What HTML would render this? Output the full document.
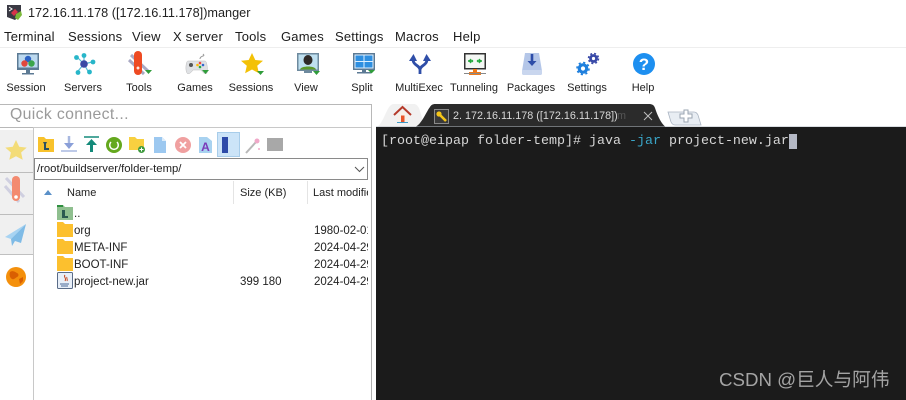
<!DOCTYPE html>
<html><head><meta charset="utf-8">
<style>
html,body{margin:0;padding:0;background:#fff}
#p{position:relative;width:906px;height:400px;overflow:hidden;background:#fff;font-family:"Liberation Sans","Noto Sans CJK SC",sans-serif;color:#222}
.t{position:absolute;white-space:nowrap;line-height:16px}
.m{font-size:13px;top:29px;letter-spacing:.2px;color:#1c1c1c}
.l{font-size:11px;top:80px;width:70px;text-align:center;color:#222}
.f{font-size:11.5px;color:#222}
.b{position:absolute}
svg{position:absolute;overflow:visible}
</style></head><body><div id="p">

<!-- title -->
<svg style="left:6px;top:4px" width="17" height="17" viewBox="0 0 17 17"><path d="M1 1h14v10l-6 5-8-3z" fill="#3a3a44"/><path d="M5 9l4-4 3 3-4 4z" fill="#d8344a"/><path d="M10 10l5-3 1 4-4 5-3-2z" fill="#7cb93a"/><path d="M3 3l3 2-3 2" stroke="#fff" fill="none"/></svg>
<div class="t" style="left:28px;top:5px;font-size:12.7px;color:#222">172.16.11.178 ([172.16.11.178])manger</div>

<!-- menu -->
<div class="t m" style="left:4px">Terminal</div>
<div class="t m" style="left:68px">Sessions</div>
<div class="t m" style="left:132px">View</div>
<div class="t m" style="left:173px">X server</div>
<div class="t m" style="left:235px">Tools</div>
<div class="t m" style="left:281px">Games</div>
<div class="t m" style="left:335px">Settings</div>
<div class="t m" style="left:395px">Macros</div>
<div class="t m" style="left:453px">Help</div>
<div class="b" style="left:0;top:47px;width:906px;height:1px;background:#eee"></div>

<!-- toolbar icons -->
<svg style="left:17px;top:53px" width="22" height="22"><rect x="0" y="0" width="22" height="17" fill="#5c7a94"/><rect x="1.500" y="1.500" width="19" height="13" fill="#bcd9ef"/><circle cx="11" cy="6" r="3.200" fill="#2c62c4"/><circle cx="7.500" cy="10.500" r="3.200" fill="#e2483c"/><circle cx="14.500" cy="10.500" r="3.200" fill="#3aa54a"/><rect x="9" y="17" width="4" height="3" fill="#5c7a94"/><rect x="5" y="20" width="12" height="1.500" fill="#5c7a94"/></svg>
<svg style="left:73px;top:53px" width="22" height="22"><g stroke="#58bcd6" stroke-width="1.200"><path d="M11 11L4 4M11 11L11 2M11 11L19 9M11 11L16 20M11 11L5 18"/></g><circle cx="11" cy="11" r="3.800" fill="#3b49a5"/><g fill="#27b6c9"><circle cx="3.500" cy="4.500" r="2.400"/><circle cx="11" cy="2.500" r="2.400"/><circle cx="20" cy="9" r="2.400"/><circle cx="16.500" cy="19" r="2.400"/><circle cx="5" cy="19.500" r="2.400"/></g></svg>
<svg style="left:129px;top:52px" width="24" height="24"><path d="M2 3L20 20M0 8L15 22" stroke="#a9a9c4" stroke-width="3"/><path d="M5 3a4 4 0 0 1 8 0v16a4 4 0 0 1-8 0z" fill="#ee4a22"/><path d="M7.500 16h3M9 14.500v3" stroke="#fff" stroke-width="1.300"/><path d="M16 18h7l-3.500 4z" fill="#2f9c3a"/></svg>
<svg style="left:185px;top:54px" width="24" height="22"><path d="M15 5C15 1 21 3 18 0" stroke="#999" fill="none"/><path d="M3 7h17c2 0 3 9 2 12-1 2-4 0-6-3H8c-2 3-5 5-6 3C0 16 1 7 3 7z" fill="#dfe1e4" stroke="#bbb" stroke-width=".5"/><circle cx="6" cy="11" r="2" fill="#555"/><circle cx="15" cy="9" r="1.300" fill="#e44"/><circle cx="18" cy="11" r="1.300" fill="#36c"/><circle cx="15" cy="13" r="1.300" fill="#2a4"/><circle cx="12.500" cy="11" r="1.300" fill="#fb0"/><path d="M17 16h7l-3.500 4z" fill="#2f9c3a"/></svg>
<svg style="left:241px;top:53px" width="24" height="22"><path d="M11 0l3.300 7 7.700.8-5.800 5 1.700 7.500L11 16.500 4.100 20.300l1.700-7.500L0 7.800 7.700 7z" fill="#f3c106"/><path d="M16 18h7l-3.500 4z" fill="#2f9c3a"/></svg>
<svg style="left:297px;top:53px" width="24" height="22"><rect width="22" height="18" fill="#6e8a9e"/><rect x="1.500" y="1.500" width="19" height="15" fill="#bfe0f0"/><ellipse cx="11" cy="7" rx="4.500" ry="5" fill="#2f2a28"/><path d="M3 16.500c1-4 15-4 16 0z" fill="#5c9a2a"/><rect x="7" y="18" width="8" height="2" fill="#6e8a9e"/><path d="M16 18h7l-3.500 4z" fill="#2f9c3a"/></svg>
<svg style="left:353px;top:53px" width="24" height="22"><rect width="22" height="17" fill="#5c7a94"/><rect x="1.500" y="1.500" width="19" height="14" fill="#dcefff"/><g fill="#2e8fe0"><rect x="2.500" y="2.500" width="8" height="5.500"/><rect x="11.500" y="2.500" width="8" height="5.500"/><rect x="2.500" y="9" width="8" height="5.500"/><rect x="11.500" y="9" width="8" height="5.500"/></g><rect x="9" y="17" width="4" height="2" fill="#5c7a94"/><rect x="4" y="19" width="14" height="1.500" fill="#5c7a94"/><path d="M15 17h7l-3.500 3.500z" fill="#2f9c3a"/></svg>
<svg style="left:409px;top:53px" width="22" height="22"><path d="M4 6c0 7 7 6 7 11v4M18 6c0 7-7 6-7 11" stroke="#2f4ea8" stroke-width="2.800" fill="none"/><path d="M0 8L4.500 1 8 8zM14 8L17.500 1 22 8z" fill="#2f4ea8"/></svg>
<svg style="left:464px;top:53px" width="23" height="23"><rect x=".75" y=".75" width="20.500" height="15" fill="#f4f7f4" stroke="#333" stroke-width="1.500"/><path d="M4 8h5M13 8h5" stroke="#22a83a" stroke-width="1.500"/><path d="M4 8l3-2.500v5zM18 8l-3-2.500v5zM9.500 8l-2-2v4zM12.500 8l2-2v4z" fill="#22a83a"/><rect x="9" y="16" width="4" height="3" fill="#f07a1a"/><rect x="5" y="19" width="12" height="3" fill="#f07a1a"/><path d="M0 20.500h22" stroke="#888"/></svg>
<svg style="left:522px;top:53px" width="20" height="23"><path d="M3 0h14l3 18v2a2 2 0 0 1-2 2H2a2 2 0 0 1-2-2v-2z" fill="#b4c6e8"/><path d="M0 17h20v3a2 2 0 0 1-2 2H2a2 2 0 0 1-2-2z" fill="#c9d6ee"/><rect x="8.700" y="1" width="2.600" height="8" fill="#2d4da8"/><path d="M5.500 8h9L10 13z" fill="#2d4da8"/></svg>
<svg style="left:576px;top:53px" width="24" height="23"><g fill="none"><circle cx="7" cy="15.500" r="3.700" stroke="#1e7fdd" stroke-width="3.200"/><circle cx="7" cy="15.500" r="6" stroke="#1e7fdd" stroke-width="1.600" stroke-dasharray="2.200 2.500"/><circle cx="17.500" cy="5.500" r="3" stroke="#3a4aa8" stroke-width="2.800"/><circle cx="17.500" cy="5.500" r="5" stroke="#3a4aa8" stroke-width="1.500" stroke-dasharray="2 2"/></g></svg>
<svg style="left:633px;top:53px" width="22" height="22"><circle cx="11" cy="11" r="11" fill="#1d8ff0"/><text x="11" y="17" text-anchor="middle" font-family="Liberation Sans" font-weight="bold" font-size="17" fill="#fff">?</text></svg>

<!-- toolbar labels -->
<div class="t l" style="left:-9px">Session</div>
<div class="t l" style="left:48px">Servers</div>
<div class="t l" style="left:104px">Tools</div>
<div class="t l" style="left:160px">Games</div>
<div class="t l" style="left:216px">Sessions</div>
<div class="t l" style="left:271px">View</div>
<div class="t l" style="left:327px">Split</div>
<div class="t l" style="left:384px">MultiExec</div>
<div class="t l" style="left:439px">Tunneling</div>
<div class="t l" style="left:496px">Packages</div>
<div class="t l" style="left:552px">Settings</div>
<div class="t l" style="left:608px">Help</div>

<!-- quick connect -->
<div class="b" style="left:0;top:104px;width:371px;height:22px;border-top:1px solid #b8b8b8;border-right:1px solid #b8b8b8;border-bottom:1px solid #b8b8b8;box-sizing:content-box"></div>
<div class="t" style="left:10px;top:107px;font-size:15.800px;color:#9a9a9a;letter-spacing:.35px">Quick connect...</div>

<!-- tabs -->
<svg style="left:376px;top:104px" width="530" height="24">
<path d="M0 23C6 22 10 6 14 2c1-1 2-2 4-2h20c2 0 3 1 5 4l6 19z" fill="#f1f1f1"/>
<path d="M39 23C46 20 50 8 54 3c1-2 3-3 5-3h214c3 0 5 1 6 4 2 6 6 16 11 19z" fill="#2b2b2b"/>
<path d="M292 8h26c2 0 3 1 4 3l3 10h-26c-2 0-3-1-4-3z" fill="#e8edf3" stroke="#aab4c2" stroke-width=".8"/>
<path d="M0 23H530" stroke="#b5bcc4" stroke-width="1"/>
</svg>
<svg style="left:394px;top:106px" width="18" height="18"><path d="M0 9L8.500 1 17 9" stroke="#b53a2a" stroke-width="2" fill="none"/><path d="M3 9L8.500 4 14 9v7H3z" fill="#f7f0e8"/><rect x="7" y="9.500" width="3.500" height="7" fill="#e8552a"/><path d="M3 16.500h11" stroke="#3e9ac8"/></svg>
<div class="b" style="left:434px;top:109px;width:15px;height:15px;background:#3a3a3a;border:1px solid #8a8a8a;box-sizing:border-box"></div>
<svg style="left:435px;top:110px" width="13" height="13"><path d="M11 11L5 5" stroke="#f5c518" stroke-width="2.600"/><circle cx="4" cy="4" r="2.600" fill="#f5c518"/></svg>
<div class="t" style="left:453px;top:108px;font-size:10.800px;color:#d8d8d8">2. 172.16.11.178 ([172.16.11.178])</div>
<div class="t" style="left:617px;top:108px;font-size:10.800px;color:#555">m</div>
<svg style="left:643px;top:111px" width="10" height="10"><path d="M1 1L9 9M9 1L1 9" stroke="#bdbdbd" stroke-width="1"/></svg>
<svg style="left:679px;top:109px" width="14" height="14"><path d="M5 1h4v4h4v4H9v4H5V9H1V5h4z" fill="#fff" stroke="#9aa4b0"/></svg>

<!-- sidebar -->
<div class="b" style="left:0;top:130px;width:33px;height:124px;background:#f0f0f0;border-right:1px solid #c0c0c0;border-bottom:1px solid #c0c0c0;box-sizing:content-box"></div>
<div class="b" style="left:0;top:172px;width:33px;height:1px;background:#bdbdbd"></div>
<div class="b" style="left:0;top:214px;width:33px;height:1px;background:#bdbdbd"></div>
<svg style="left:5px;top:140px" width="22" height="20"><path d="M11 0l3.200 6.800 7.500.8-5.600 4.900 1.600 7.300L11 16.200 4.300 19.800l1.600-7.300L.3 7.600l7.500-.8z" fill="#f3dc78"/></svg>
<svg style="left:5px;top:175px" width="22" height="32"><path d="M1 3L19 22M0 11L14 27" stroke="#cfcfe0" stroke-width="3"/><path d="M7 5a4 4 0 0 1 8 0v17a4 4 0 0 1-8 0z" fill="#f38a70"/><circle cx="11" cy="22" r="1.800" fill="#fff"/></svg>
<svg style="left:5px;top:224px" width="22" height="22"><path d="M21 0L0 13l6 2z" fill="#a7d3f2"/><path d="M21 0L6 15l1 7 3-5 6 2z" fill="#7fbbe6"/></svg>
<svg style="left:6px;top:267px" width="20" height="20"><circle cx="10" cy="10" r="10" fill="#f4900c"/><path d="M4 5c3-2 5 0 7 1s2 3 0 4-3 3-5 2-3-4-2-7zM13 12l4-2 0 4-3 3z" fill="#d95f02"/></svg>

<!-- file panel -->
<div class="b" style="left:33px;top:127px;width:338px;height:273px;border-left:1px solid #c8c8c8;border-top:1px solid #c8c8c8;box-sizing:border-box"></div>
<div class="b" style="left:371px;top:127px;width:1px;height:273px;background:#b0b0b0"></div>
<div class="b" style="left:376px;top:127px;width:530px;height:273px;background:#1b1b1b"></div>

<!-- file toolbar -->
<svg style="left:38px;top:137px" width="16" height="15"><path d="M0 0h6l2 2h8v13H0z" fill="#f8c22c"/><path d="M5 5h4l-1 2v4h3v2H6V7z" fill="#2b5060"/></svg>
<svg style="left:61px;top:136px" width="16" height="16"><path d="M8 0v10" stroke="#a8b8e0" stroke-width="2.500"/><path d="M3 7h10l-5 6z" fill="#8a9fd8"/><path d="M0 15h16" stroke="#a8b8e0" stroke-width="1.500"/></svg>
<svg style="left:84px;top:136px" width="15" height="16"><path d="M0 1h15" stroke="#148a7a" stroke-width="1.500"/><path d="M2 9l5.500-6L13 9z" fill="#148a7a"/><rect x="6" y="8" width="3" height="8" fill="#148a7a"/></svg>
<svg style="left:106px;top:137px" width="16" height="16"><circle cx="8" cy="8" r="8" fill="#64a81e"/><path d="M5 5a4.300 4.300 0 1 0 6 0" stroke="#fff" stroke-width="1.500" fill="none"/><path d="M8 2v4" stroke="#64a81e" stroke-width="2"/></svg>
<svg style="left:129px;top:137px" width="16" height="16"><path d="M0 0h6l2 2h7v11H0z" fill="#f8d040"/><circle cx="12.500" cy="12.500" r="3.500" fill="#3f9a3f"/><path d="M10.500 12.500h4M12.500 10.500v4" stroke="#fff"/></svg>
<svg style="left:154px;top:137px" width="12" height="16"><path d="M0 0h8l4 4v12H0z" fill="#9cc8f0"/><path d="M8 0v4h4z" fill="#dcecfa"/></svg>
<svg style="left:175px;top:137px" width="16" height="16"><circle cx="8" cy="8" r="8" fill="#f0a0a0"/><path d="M5 5l6 6M11 5l-6 6" stroke="#fff" stroke-width="1.800"/></svg>
<svg style="left:199px;top:137px" width="13" height="16"><path d="M0 0h8l5 4v12H0z" fill="#a8d2f0"/><text x="6.500" y="14" text-anchor="middle" font-family="Liberation Sans" font-weight="bold" font-size="12" fill="#7a3ab8">A</text></svg>
<div class="b" style="left:217px;top:132px;width:23px;height:25px;background:#cce4f8;border:1px solid #a8cdea;box-sizing:border-box"></div>
<div class="b" style="left:222px;top:137px;width:6px;height:16px;background:#2d4aa8"></div>
<svg style="left:245px;top:138px" width="16" height="16"><path d="M1 15L11 4" stroke="#b8b8b8" stroke-width="2"/><circle cx="12" cy="3" r="2.500" fill="#f0a8c8"/><circle cx="14" cy="11" r="1" fill="#f0a8c8"/></svg>
<div class="b" style="left:267px;top:138px;width:16px;height:13px;background:#a8a8a8"></div>

<!-- path -->
<div class="b" style="left:34px;top:158px;width:334px;height:22px;border:1px solid #8a8a8a;box-sizing:border-box"></div>
<div class="t f" style="left:37px;top:161px;font-size:11.300px">/root/buildserver/folder-temp/</div>
<svg style="left:354px;top:166px" width="11" height="7"><path d="M1 1l4.500 4.500L10 1" stroke="#555" fill="none"/></svg>

<!-- header -->
<svg style="left:44px;top:190px" width="8" height="5"><path d="M0 5L4 0l4 5z" fill="#5a90c8"/></svg>
<div class="t f" style="left:67px;top:185px;font-size:11px">Name</div>
<div class="t f" style="left:240px;top:185px;font-size:11px">Size (KB)</div>
<div class="t f" style="left:313px;top:185px;font-size:11px;width:55px;overflow:hidden">Last modified</div>
<div class="b" style="left:233px;top:181px;width:1px;height:23px;background:#e4e4e4"></div>
<div class="b" style="left:307px;top:181px;width:1px;height:23px;background:#e4e4e4"></div>

<!-- rows -->
<svg style="left:57px;top:205px" width="16" height="15"><path d="M0 0h6l2 2h8v13H0z" fill="#8fbf8f"/><path d="M0 0h6v2H0z" fill="#2f8f3f"/><path d="M5 5h3v6h3v2H5z" fill="#2b5a50"/></svg>
<div class="t f" style="left:74px;top:206px;font-size:11.500px">..</div>
<svg style="left:57px;top:222px" width="16" height="15"><path d="M0 0h6l2 2h8v13H0z" fill="#fcc02e"/></svg>
<div class="t f" style="left:74px;top:223px;font-size:11.500px">org</div>
<svg style="left:57px;top:239px" width="16" height="15"><path d="M0 0h6l2 2h8v13H0z" fill="#fcc02e"/></svg>
<div class="t f" style="left:74px;top:240px;font-size:11.500px">META-INF</div>
<svg style="left:57px;top:256px" width="16" height="15"><path d="M0 0h6l2 2h8v13H0z" fill="#fcc02e"/></svg>
<div class="t f" style="left:74px;top:257px;font-size:11.500px">BOOT-INF</div>
<svg style="left:57px;top:272px" width="16" height="17"><rect x=".5" y=".5" width="15" height="16" rx="1" fill="#e8eff8" stroke="#5a6c88"/><path d="M3 12h9M4 14h7" stroke="#4a6a98"/><path d="M8 3c-2 2 2 3 0 6M10 5c-1 1 1 2 0 4" stroke="#c84a20" fill="none"/></svg>
<div class="t f" style="left:74px;top:274px;font-size:11.500px">project-new.jar</div>
<div class="t f" style="left:240px;top:274px;font-size:11.500px">399 180</div>
<div class="t f" style="left:314px;top:223px;font-size:11.500px;width:54px;overflow:hidden">1980-02-01</div>
<div class="t f" style="left:314px;top:240px;font-size:11.500px;width:54px;overflow:hidden">2024-04-29</div>
<div class="t f" style="left:314px;top:257px;font-size:11.500px;width:54px;overflow:hidden">2024-04-29</div>
<div class="t f" style="left:314px;top:274px;font-size:11.500px;width:54px;overflow:hidden">2024-04-29</div>

<!-- terminal -->
<div class="t" style="left:381px;top:134px;font-family:'Liberation Mono',monospace;font-size:13.330px;color:#d6d6d6;letter-spacing:0;white-space:pre">[root@eipap folder-temp]# java <span style="color:#3aa6c8">-jar</span> project-new.jar</div>
<div class="b" style="left:789px;top:134px;width:8px;height:15px;background:#b4b8c4"></div>

<!-- watermark -->
<div class="t" style="left:719px;top:368px;font-size:18.700px;line-height:24px;color:#a4a4a4">CSDN @巨人与阿伟</div>
</div></body></html>
